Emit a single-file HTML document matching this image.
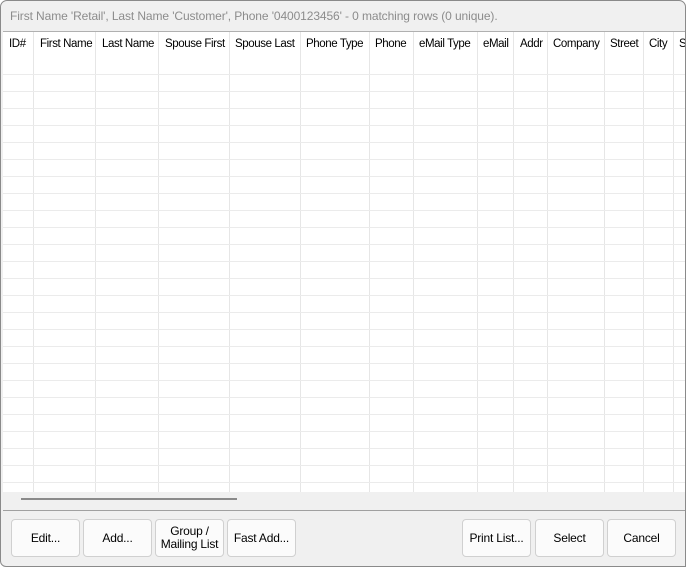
<!DOCTYPE html><html><head><style>
body{margin:0;width:686px;height:567px;background:#fff;overflow:hidden;font-family:"Liberation Sans",sans-serif;position:relative}
.win{position:absolute;left:0;top:0;width:684px;height:565px;border:1px solid #8a8a8a;border-radius:7px 7px 0 6px;background:#f0f0f0;overflow:hidden}
.title{position:absolute;left:9px;top:8px;font-size:12px;color:#8c8c8c;letter-spacing:-0.1px}
.grid{position:absolute;left:2px;top:30px;width:683px;height:478px;background:#fff;border-top:1px solid #b0b0b0;border-bottom:1px solid #a0a0a0;overflow:hidden}
.hdr{position:absolute;top:-1px;height:26px;font-size:11.5px;letter-spacing:-0.4px;color:#000;line-height:26px;white-space:nowrap}
.vl{position:absolute;top:0;width:1px;height:460px;background:#e6e6e6}
.hl{position:absolute;left:0;width:683px;height:1px;background:#ebebeb}
.sb{position:absolute;left:0;top:460px;width:683px;height:18px;background:#f0f0f0}
.thumb{position:absolute;left:18px;top:6px;width:216px;height:2px;background:#8a8a8a}
.btn{position:absolute;top:518px;width:67px;height:36px;border:1px solid #d0d0d0;border-radius:4px;background:#fbfbfb;font-size:12px;letter-spacing:-0.2px;text-align:center;display:flex;align-items:center;justify-content:center;line-height:13px;color:#000}
</style></head><body><div class="win">
<div class="title">First Name 'Retail', Last Name 'Customer', Phone '0400123456' - 0 matching rows (0 unique).</div>
<div class="grid">
<div class="hdr" style="left:6px">ID#</div>
<div class="hdr" style="left:37px">First Name</div>
<div class="hdr" style="left:99px">Last Name</div>
<div class="hdr" style="left:162px">Spouse First</div>
<div class="hdr" style="left:232px">Spouse Last</div>
<div class="hdr" style="left:303px">Phone Type</div>
<div class="hdr" style="left:372px">Phone</div>
<div class="hdr" style="left:416px">eMail Type</div>
<div class="hdr" style="left:480px">eMail</div>
<div class="hdr" style="left:517px">Addr</div>
<div class="hdr" style="left:550px">Company</div>
<div class="hdr" style="left:607px">Street</div>
<div class="hdr" style="left:646px">City</div>
<div class="hdr" style="left:676px">S</div>
<div class="vl" style="left:30px"></div><div class="vl" style="left:92px"></div><div class="vl" style="left:155px"></div><div class="vl" style="left:226px"></div><div class="vl" style="left:297px"></div><div class="vl" style="left:366px"></div><div class="vl" style="left:410px"></div><div class="vl" style="left:474px"></div><div class="vl" style="left:510px"></div><div class="vl" style="left:544px"></div><div class="vl" style="left:601px"></div><div class="vl" style="left:640px"></div><div class="vl" style="left:670px"></div>
<div class="hl" style="top:42px"></div><div class="hl" style="top:59px"></div><div class="hl" style="top:76px"></div><div class="hl" style="top:93px"></div><div class="hl" style="top:110px"></div><div class="hl" style="top:127px"></div><div class="hl" style="top:144px"></div><div class="hl" style="top:161px"></div><div class="hl" style="top:178px"></div><div class="hl" style="top:195px"></div><div class="hl" style="top:212px"></div><div class="hl" style="top:229px"></div><div class="hl" style="top:246px"></div><div class="hl" style="top:263px"></div><div class="hl" style="top:280px"></div><div class="hl" style="top:297px"></div><div class="hl" style="top:314px"></div><div class="hl" style="top:331px"></div><div class="hl" style="top:348px"></div><div class="hl" style="top:365px"></div><div class="hl" style="top:382px"></div><div class="hl" style="top:399px"></div><div class="hl" style="top:416px"></div><div class="hl" style="top:433px"></div><div class="hl" style="top:450px"></div>
<div class="sb"><div class="thumb"></div></div>
</div>
<div class="btn" style="left:10px">Edit...</div>
<div class="btn" style="left:82px">Add...</div>
<div class="btn" style="left:154px">Group /<br>Mailing List</div>
<div class="btn" style="left:226px">Fast Add...</div>
<div class="btn" style="left:461px">Print List...</div>
<div class="btn" style="left:534px">Select</div>
<div class="btn" style="left:606px">Cancel</div>
</div></body></html>
